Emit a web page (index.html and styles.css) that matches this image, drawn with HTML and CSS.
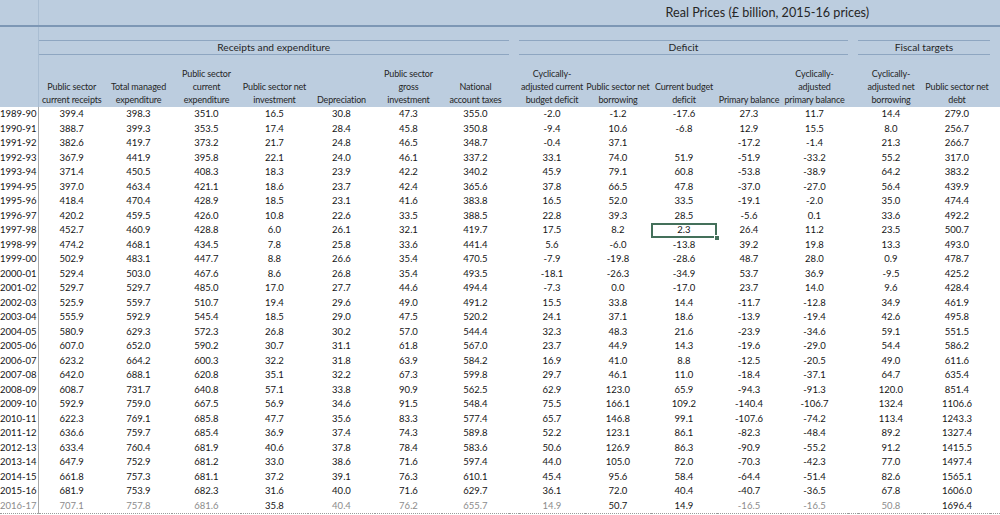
FILE: index.html
```html
<!DOCTYPE html>
<html>
<head>
<meta charset="utf-8">
<link rel="stylesheet" href="styles.css">
</head>
<body>
<table class="sheet">
<colgroup>
<col class="c-yr"><col class="c67"><col class="c67"><col class="c69"><col class="c67"><col class="c67"><col class="c67"><col class="c67"><col class="c-sp"><col class="c66"><col class="c66"><col class="c66"><col class="c64"><col class="c67"><col class="c-sp"><col class="c66"><col class="c66"><col class="c-sp">
</colgroup>
<thead>
<tr class="r-title"><td class="yr"></td><td class="title" colspan="17">Real Prices (£ billion, 2015-16 prices)</td></tr>
<tr class="r-band"><td class="yr"></td><td colspan="17"></td></tr>
<tr class="r-group"><td class="yr"></td><td class="grp" colspan="7">Receipts and expenditure</td><td></td><td class="grp" colspan="5">Deficit</td><td></td><td class="grp" colspan="2">Fiscal targets</td><td></td></tr>
<tr class="r-head">
<td class="yr"></td>
<td>Public sector<br>current receipts</td>
<td>Total managed<br>expenditure</td>
<td>Public sector<br>current<br>expenditure</td>
<td>Public sector net<br>investment</td>
<td>Depreciation</td>
<td>Public sector<br>gross<br>investment</td>
<td>National<br>account taxes</td>
<td></td>
<td>Cyclically-<br>adjusted current<br>budget deficit</td>
<td>Public sector net<br>borrowing</td>
<td>Current budget<br>deficit</td>
<td>Primary balance</td>
<td>Cyclically-<br>adjusted<br>primary balance</td>
<td></td>
<td>Cyclically-<br>adjusted net<br>borrowing</td>
<td>Public sector net<br>debt</td>
<td></td>
</tr>
</thead>
<tbody>
<tr><td class="yr">1989-90</td><td>399.4</td><td>398.3</td><td>351.0</td><td>16.5</td><td>30.8</td><td>47.3</td><td>355.0</td><td></td><td>-2.0</td><td>-1.2</td><td>-17.6</td><td>27.3</td><td>11.7</td><td></td><td>14.4</td><td>279.0</td><td></td></tr>
<tr><td class="yr">1990-91</td><td>388.7</td><td>399.3</td><td>353.5</td><td>17.4</td><td>28.4</td><td>45.8</td><td>350.8</td><td></td><td>-9.4</td><td>10.6</td><td>-6.8</td><td>12.9</td><td>15.5</td><td></td><td>8.0</td><td>256.7</td><td></td></tr>
<tr><td class="yr">1991-92</td><td>382.6</td><td>419.7</td><td>373.2</td><td>21.7</td><td>24.8</td><td>46.5</td><td>348.7</td><td></td><td>-0.4</td><td>37.1</td><td></td><td>-17.2</td><td>-1.4</td><td></td><td>21.3</td><td>266.7</td><td></td></tr>
<tr><td class="yr">1992-93</td><td>367.9</td><td>441.9</td><td>395.8</td><td>22.1</td><td>24.0</td><td>46.1</td><td>337.2</td><td></td><td>33.1</td><td>74.0</td><td>51.9</td><td>-51.9</td><td>-33.2</td><td></td><td>55.2</td><td>317.0</td><td></td></tr>
<tr><td class="yr">1993-94</td><td>371.4</td><td>450.5</td><td>408.3</td><td>18.3</td><td>23.9</td><td>42.2</td><td>340.2</td><td></td><td>45.9</td><td>79.1</td><td>60.8</td><td>-53.8</td><td>-38.9</td><td></td><td>64.2</td><td>383.2</td><td></td></tr>
<tr><td class="yr">1994-95</td><td>397.0</td><td>463.4</td><td>421.1</td><td>18.6</td><td>23.7</td><td>42.4</td><td>365.6</td><td></td><td>37.8</td><td>66.5</td><td>47.8</td><td>-37.0</td><td>-27.0</td><td></td><td>56.4</td><td>439.9</td><td></td></tr>
<tr><td class="yr">1995-96</td><td>418.4</td><td>470.4</td><td>428.9</td><td>18.5</td><td>23.1</td><td>41.6</td><td>383.8</td><td></td><td>16.5</td><td>52.0</td><td>33.5</td><td>-19.1</td><td>-2.0</td><td></td><td>35.0</td><td>474.4</td><td></td></tr>
<tr><td class="yr">1996-97</td><td>420.2</td><td>459.5</td><td>426.0</td><td>10.8</td><td>22.6</td><td>33.5</td><td>388.5</td><td></td><td>22.8</td><td>39.3</td><td>28.5</td><td>-5.6</td><td>0.1</td><td></td><td>33.6</td><td>492.2</td><td></td></tr>
<tr><td class="yr">1997-98</td><td>452.7</td><td>460.9</td><td>428.8</td><td>6.0</td><td>26.1</td><td>32.1</td><td>419.7</td><td></td><td>17.5</td><td>8.2</td><td class="sel">2.3</td><td>26.4</td><td>11.2</td><td></td><td>23.5</td><td>500.7</td><td></td></tr>
<tr><td class="yr">1998-99</td><td>474.2</td><td>468.1</td><td>434.5</td><td>7.8</td><td>25.8</td><td>33.6</td><td>441.4</td><td></td><td>5.6</td><td>-6.0</td><td>-13.8</td><td>39.2</td><td>19.8</td><td></td><td>13.3</td><td>493.0</td><td></td></tr>
<tr><td class="yr">1999-00</td><td>502.9</td><td>483.1</td><td>447.7</td><td>8.8</td><td>26.6</td><td>35.4</td><td>470.5</td><td></td><td>-7.9</td><td>-19.8</td><td>-28.6</td><td>48.7</td><td>28.0</td><td></td><td>0.9</td><td>478.7</td><td></td></tr>
<tr><td class="yr">2000-01</td><td>529.4</td><td>503.0</td><td>467.6</td><td>8.6</td><td>26.8</td><td>35.4</td><td>493.5</td><td></td><td>-18.1</td><td>-26.3</td><td>-34.9</td><td>53.7</td><td>36.9</td><td></td><td>-9.5</td><td>425.2</td><td></td></tr>
<tr><td class="yr">2001-02</td><td>529.7</td><td>529.7</td><td>485.0</td><td>17.0</td><td>27.7</td><td>44.6</td><td>494.4</td><td></td><td>-7.3</td><td>0.0</td><td>-17.0</td><td>23.7</td><td>14.0</td><td></td><td>9.6</td><td>428.4</td><td></td></tr>
<tr><td class="yr">2002-03</td><td>525.9</td><td>559.7</td><td>510.7</td><td>19.4</td><td>29.6</td><td>49.0</td><td>491.2</td><td></td><td>15.5</td><td>33.8</td><td>14.4</td><td>-11.7</td><td>-12.8</td><td></td><td>34.9</td><td>461.9</td><td></td></tr>
<tr><td class="yr">2003-04</td><td>555.9</td><td>592.9</td><td>545.4</td><td>18.5</td><td>29.0</td><td>47.5</td><td>520.2</td><td></td><td>24.1</td><td>37.1</td><td>18.6</td><td>-13.9</td><td>-19.4</td><td></td><td>42.6</td><td>495.8</td><td></td></tr>
<tr><td class="yr">2004-05</td><td>580.9</td><td>629.3</td><td>572.3</td><td>26.8</td><td>30.2</td><td>57.0</td><td>544.4</td><td></td><td>32.3</td><td>48.3</td><td>21.6</td><td>-23.9</td><td>-34.6</td><td></td><td>59.1</td><td>551.5</td><td></td></tr>
<tr><td class="yr">2005-06</td><td>607.0</td><td>652.0</td><td>590.2</td><td>30.7</td><td>31.1</td><td>61.8</td><td>567.0</td><td></td><td>23.7</td><td>44.9</td><td>14.3</td><td>-19.6</td><td>-29.0</td><td></td><td>54.4</td><td>586.2</td><td></td></tr>
<tr><td class="yr">2006-07</td><td>623.2</td><td>664.2</td><td>600.3</td><td>32.2</td><td>31.8</td><td>63.9</td><td>584.2</td><td></td><td>16.9</td><td>41.0</td><td>8.8</td><td>-12.5</td><td>-20.5</td><td></td><td>49.0</td><td>611.6</td><td></td></tr>
<tr><td class="yr">2007-08</td><td>642.0</td><td>688.1</td><td>620.8</td><td>35.1</td><td>32.2</td><td>67.3</td><td>599.8</td><td></td><td>29.7</td><td>46.1</td><td>11.0</td><td>-18.4</td><td>-37.1</td><td></td><td>64.7</td><td>635.4</td><td></td></tr>
<tr><td class="yr">2008-09</td><td>608.7</td><td>731.7</td><td>640.8</td><td>57.1</td><td>33.8</td><td>90.9</td><td>562.5</td><td></td><td>62.9</td><td>123.0</td><td>65.9</td><td>-94.3</td><td>-91.3</td><td></td><td>120.0</td><td>851.4</td><td></td></tr>
<tr><td class="yr">2009-10</td><td>592.9</td><td>759.0</td><td>667.5</td><td>56.9</td><td>34.6</td><td>91.5</td><td>548.4</td><td></td><td>75.5</td><td>166.1</td><td>109.2</td><td>-140.4</td><td>-106.7</td><td></td><td>132.4</td><td>1106.6</td><td></td></tr>
<tr><td class="yr">2010-11</td><td>622.3</td><td>769.1</td><td>685.8</td><td>47.7</td><td>35.6</td><td>83.3</td><td>577.4</td><td></td><td>65.7</td><td>146.8</td><td>99.1</td><td>-107.6</td><td>-74.2</td><td></td><td>113.4</td><td>1243.3</td><td></td></tr>
<tr><td class="yr">2011-12</td><td>636.6</td><td>759.7</td><td>685.4</td><td>36.9</td><td>37.4</td><td>74.3</td><td>589.8</td><td></td><td>52.2</td><td>123.1</td><td>86.1</td><td>-82.3</td><td>-48.4</td><td></td><td>89.2</td><td>1327.4</td><td></td></tr>
<tr><td class="yr">2012-13</td><td>633.4</td><td>760.4</td><td>681.9</td><td>40.6</td><td>37.8</td><td>78.4</td><td>583.6</td><td></td><td>50.6</td><td>126.9</td><td>86.3</td><td>-90.9</td><td>-55.2</td><td></td><td>91.2</td><td>1415.5</td><td></td></tr>
<tr><td class="yr">2013-14</td><td>647.9</td><td>752.9</td><td>681.2</td><td>33.0</td><td>38.6</td><td>71.6</td><td>597.4</td><td></td><td>44.0</td><td>105.0</td><td>72.0</td><td>-70.3</td><td>-42.3</td><td></td><td>77.0</td><td>1497.4</td><td></td></tr>
<tr><td class="yr">2014-15</td><td>661.8</td><td>757.3</td><td>681.1</td><td>37.2</td><td>39.1</td><td>76.3</td><td>610.1</td><td></td><td>45.4</td><td>95.6</td><td>58.4</td><td>-64.4</td><td>-51.4</td><td></td><td>82.6</td><td>1565.1</td><td></td></tr>
<tr><td class="yr">2015-16</td><td>681.9</td><td>753.9</td><td>682.3</td><td>31.6</td><td>40.0</td><td>71.6</td><td>629.7</td><td></td><td>36.1</td><td>72.0</td><td>40.4</td><td>-40.7</td><td>-36.5</td><td></td><td>67.8</td><td>1606.0</td><td></td></tr>
<tr class="last"><td class="yr g">2016-17</td><td class="g">707.1</td><td class="g">757.8</td><td class="g">681.6</td><td>35.8</td><td class="g">40.4</td><td class="g">76.2</td><td class="g">655.7</td><td></td><td class="g">14.9</td><td>50.7</td><td>14.9</td><td class="g">-16.5</td><td class="g">-16.5</td><td></td><td class="g">50.8</td><td>1696.4</td><td></td></tr>
</tbody>
</table>
</body>
</html>
```

FILE: styles.css
```css
html, body {
  margin: 0;
  padding: 0;
  background: #ffffff;
}

body {
  font-family: Lato, "Liberation Sans", Arial, sans-serif;
  color: #1e1e1e;
  width: 1000px;
  height: 515px;
  overflow: hidden;
}

.sheet {
  border-collapse: collapse;
  table-layout: fixed;
  width: 1000px;
}

.c-yr { width: 38px; }
.c67 { width: 67px; }
.c69 { width: 69px; }
.c66 { width: 66px; }
.c64 { width: 64px; }
.c-sp { width: 10px; }

.sheet td {
  padding: 0;
  text-align: center;
  white-space: nowrap;
  overflow: visible;
}

.sheet thead td {
  background: #bccddf;
  color: #262626;
}

.sheet thead td.yr {
  border-right: 1px solid #a9bdd2;
}

.r-title td {
  height: 25px;
  border-bottom: 2px solid #7d97b5;
}

.title {
  text-align: right !important;
  padding-right: 131px !important;
  font-size: 12.6px;
  color: #222222;
  vertical-align: middle;
}

.r-band td {
  height: 13px;
}

.r-group td {
  height: 13px;
  font-size: 10.2px;
  line-height: 13px;
}

.sheet td.grp {
  border-top: 1px solid #8ea6c1;
  border-bottom: 1px solid #8ea6c1;
}

.r-head td {
  height: 51px;
  vertical-align: bottom;
  font-size: 9px;
  letter-spacing: -0.15px;
  line-height: 13px;
  padding-bottom: 1px;
}

.sheet tbody td {
  height: 14.5px;
  font-size: 9.5px;
  line-height: 14px;
  color: #151515;
}

.sheet tbody td.yr {
  text-align: right;
  padding-right: 2px;
  border-right: 1px solid #a8a8a8;
}

.sheet tbody td.g {
  color: #8c8c8c;
}

.sheet tr.last td {
  border-bottom: 1px dotted #9a9a9a;
}

.sheet td.sel {
  position: relative;
  outline: 2px solid #44705a;
  outline-offset: -2px;
}

.sheet td.sel::after {
  content: "";
  position: absolute;
  right: -3px;
  bottom: -3px;
  width: 4px;
  height: 4px;
  background: #44705a;
  border: 1px solid #ffffff;
}
```
